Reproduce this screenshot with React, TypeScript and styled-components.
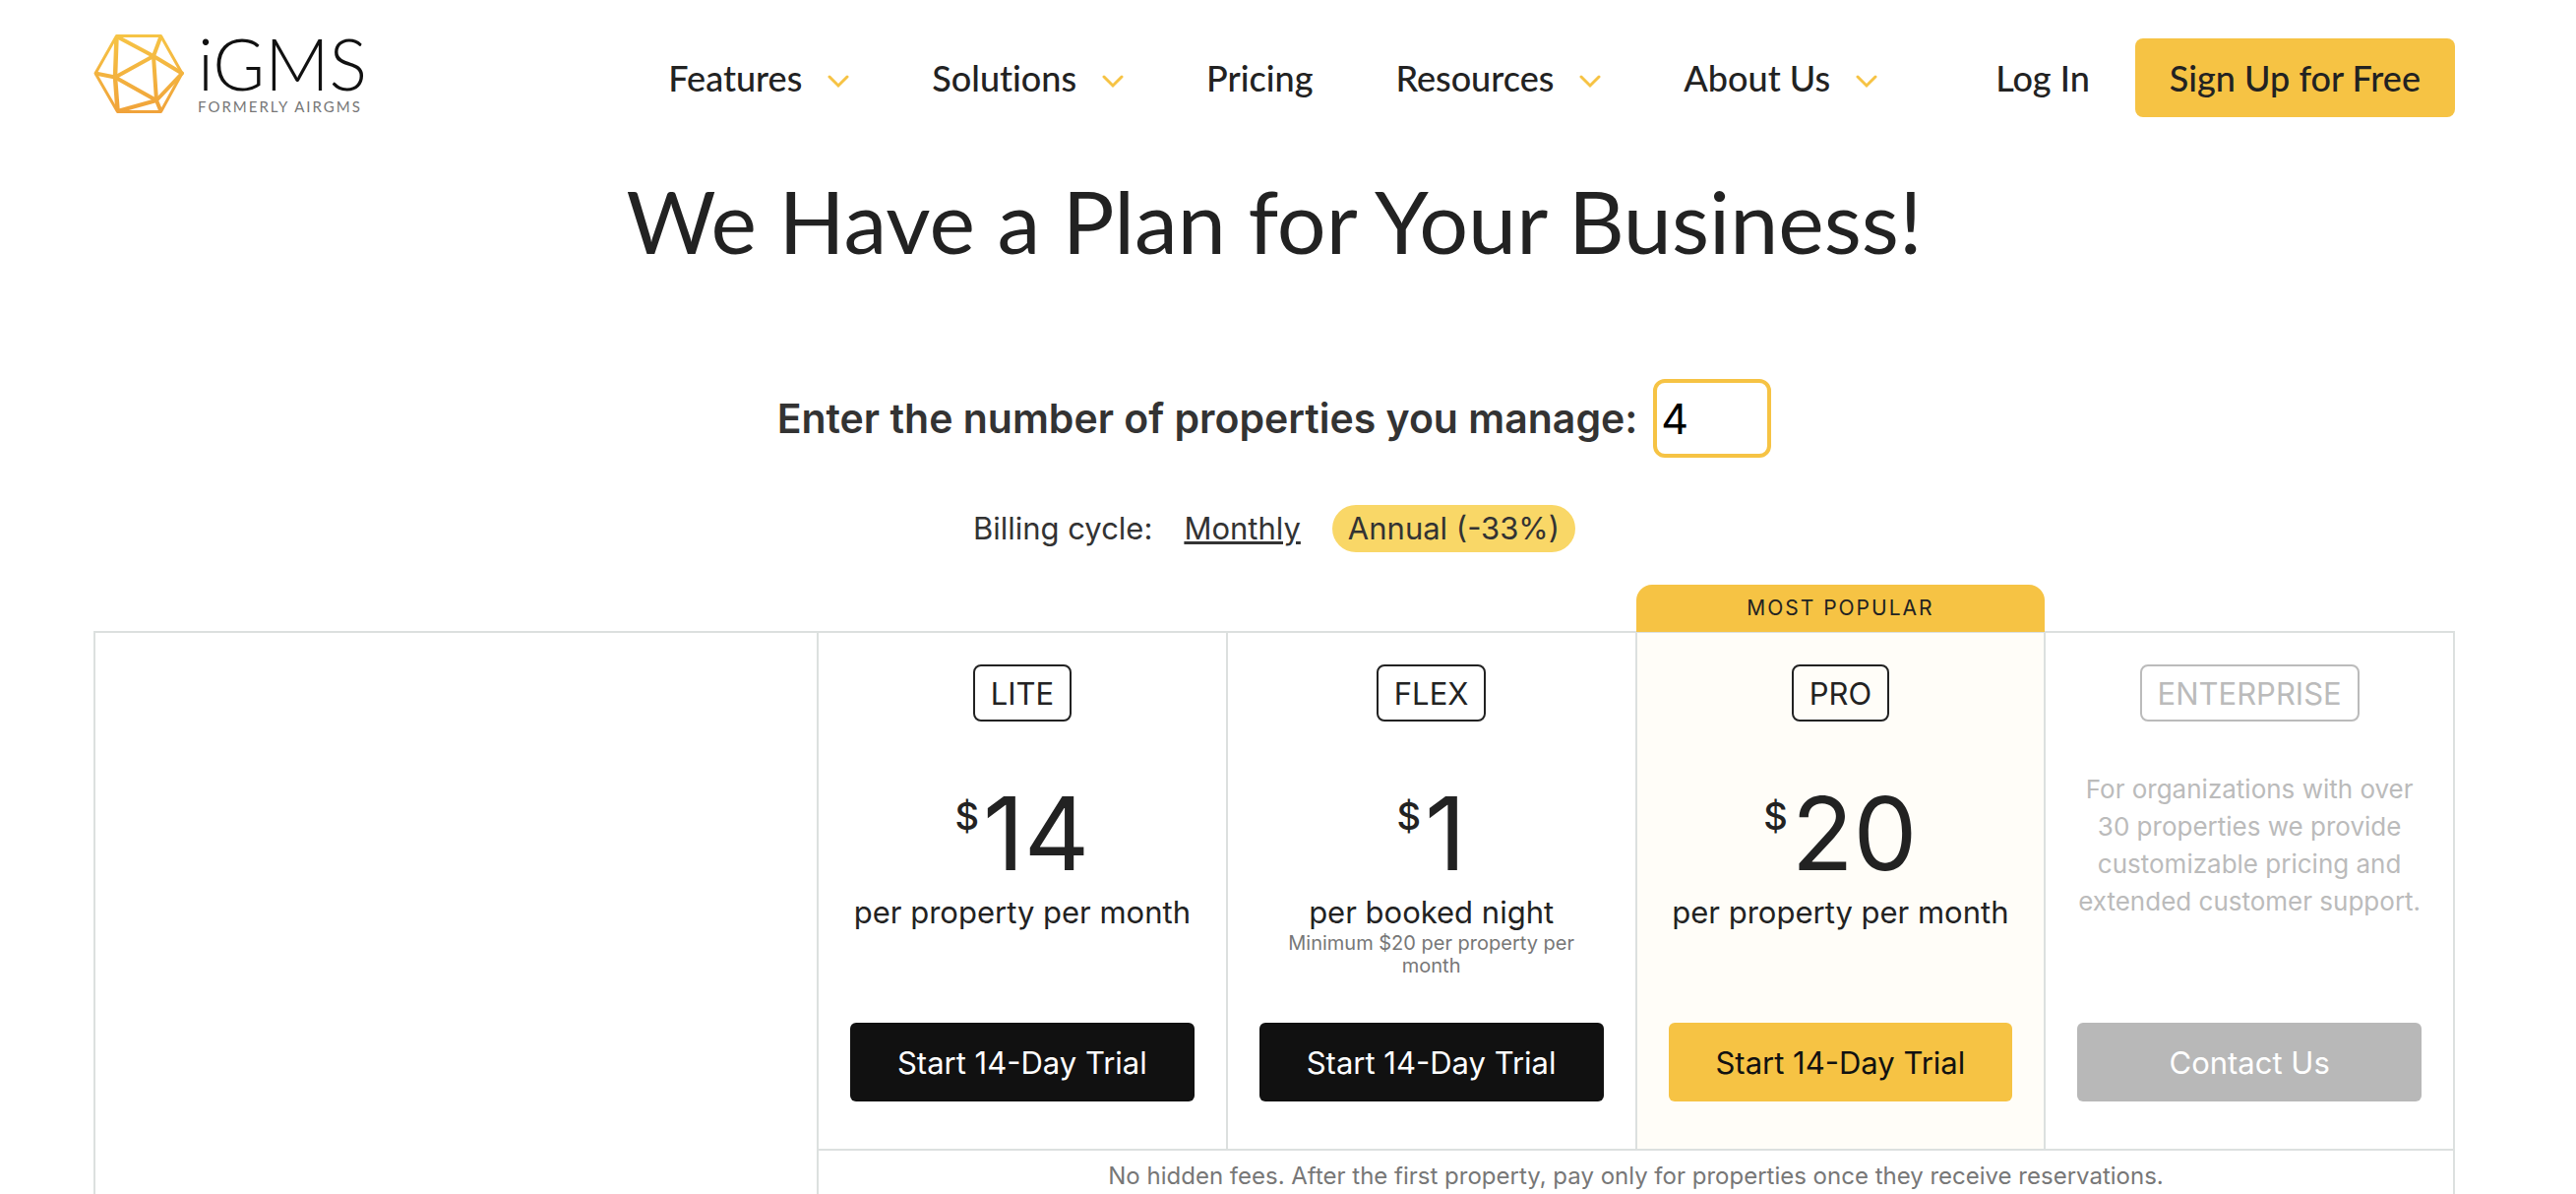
import React, { useState } from "react";
import styled, { createGlobalStyle, css } from "styled-components";

const yellow = "#f6c344";
const line = "#dce0df";
const ink = "#222222";

const GlobalStyle = createGlobalStyle`
  *, *::before, *::after { box-sizing: border-box; }
  body { margin: 0; background: #ffffff; color: ${ink}; font-family: Inter, "Liberation Sans", sans-serif; }
  button, input { font: inherit; }
`;

const Page = styled.div`
  height: 100vh;
  overflow: hidden;
  padding: 0 28px 0 0;
`;

const Container = styled.div`
  max-width: 2400px;
  margin: 0 auto;
`;

const Header = styled.header`
  display: flex;
  align-items: flex-start;
  justify-content: space-between;
  padding-top: 35px;
  font-family: Lato, "Liberation Sans", sans-serif;
  font-variant-ligatures: none;
`;

const Logo = styled.a`
  display: flex;
  align-items: flex-start;
  gap: 14px;
  color: #111111;
  text-decoration: none;
`;

const Wordmark = styled.span`
  display: flex;
  flex-direction: column;
`;

const Brand = styled.span`
  font-size: 72px;
  font-weight: 300;
  line-height: 58px;
`;

const Former = styled.span`
  font-size: 15px;
  line-height: 30px;
  letter-spacing: 2px;
  color: #777777;
`;

const Nav = styled.nav`
  display: flex;
  align-items: center;
  gap: 84px;
  height: 80px;
  margin-top: 4px;
  font-size: 36px;
  font-weight: 500;
  line-height: 44px;
`;

const NavLink = styled.a`
  display: flex;
  align-items: center;
  gap: 24px;
  color: ${ink};
  text-decoration: none;
  white-space: nowrap;
`;

const Account = styled.div`
  display: flex;
  align-items: center;
  gap: 46px;
  margin-left: 36px;
`;

const SignUp = styled.a`
  display: flex;
  align-items: center;
  height: 80px;
  padding: 0 35px;
  border-radius: 8px;
  background: ${yellow};
  color: ${ink};
  text-decoration: none;
  white-space: nowrap;
`;

const Title = styled.h1`
  margin: 47px 0 0;
  font-family: Lato, "Liberation Sans", sans-serif;
  font-size: 88px;
  font-weight: 400;
  line-height: 108px;
  text-align: center;
`;

const CountRow = styled.div`
  display: flex;
  justify-content: center;
  align-items: center;
  gap: 16px;
  margin-top: 107px;
  font-size: 43px;
  color: #333333;
`;

const CountLabel = styled.label`
  font-size: 41px;
  font-weight: 600;
`;

const CountInput = styled.input`
  width: 120px;
  height: 80px;
  padding: 0 4px;
  border: 4px solid ${yellow};
  border-radius: 12px;
  background: #ffffff;
  color: #000000;
  outline: none;
`;

const Billing = styled.div`
  display: flex;
  justify-content: center;
  align-items: center;
  gap: 16px;
  margin-top: 48px;
  font-size: 31px;
  line-height: 48px;
  color: #333333;
`;

const Cycle = styled.button<{ $active: boolean }>`
  height: 48px;
  padding: 0 16px;
  border: 0;
  border-radius: 24px;
  background: ${(p) => (p.$active ? "#f9d767" : "transparent")};
  color: inherit;
  text-decoration: ${(p) => (p.$active ? "none" : "underline")};
  cursor: pointer;
`;

const Plans = styled.table`
  width: 100%;
  margin-top: 80px;
  table-layout: fixed;
  border-collapse: collapse;
  text-align: center;

  th, td { border: 2px solid ${line}; }
`;

const FeatureCol = styled.col`
  width: 735px;
`;

const Cell = styled.th<{ $popular?: boolean; $muted?: boolean }>`
  position: relative;
  padding: 0;
  font-weight: 400;
  vertical-align: top;
  background: ${(p) => (p.$popular ? "#fffdf8" : "#ffffff")};
  color: ${(p) => (p.$muted ? "#bbbbbb" : ink)};
`;

const Ribbon = styled.div`
  position: absolute;
  left: -1px;
  right: -1px;
  bottom: 100%;
  margin-bottom: 1px;
  height: 48px;
  border-radius: 16px 16px 0 0;
  background: ${yellow};
  font-size: 21px;
  line-height: 48px;
  letter-spacing: 2px;
`;

const CellBody = styled.div`
  display: flex;
  flex-direction: column;
  align-items: center;
  height: 524px;
  padding: 32px 32px 48px;
`;

const PlanName = styled.div`
  height: 58px;
  padding: 0 16px;
  border: 2px solid currentColor;
  border-radius: 8px;
  font-size: 31px;
  line-height: 56px;
`;

const Price = styled.div`
  display: flex;
  align-items: flex-start;
  gap: 4px;
  margin-top: 62px;
  font-size: 103px;
  line-height: 104px;
`;

const Currency = styled.span`
  margin-top: 12px;
  font-size: 38px;
  font-weight: 500;
  line-height: 44px;
`;

const Unit = styled.div`
  margin-top: 8px;
  font-size: 31px;
  line-height: 40px;
  white-space: nowrap;
`;

const Minimum = styled.div`
  width: 320px;
  font-size: 20px;
  line-height: 23px;
  color: #777777;
`;

const Pitch = styled.p`
  margin: 50px 0 0;
  font-size: 26px;
  line-height: 38px;
`;

const tones = {
  dark: css`background: #111111; color: #ffffff;`,
  accent: css`background: ${yellow}; color: #111111;`,
  muted: css`background: #b8b8b8; color: #ffffff;`,
};

const Action = styled.button<{ $tone: keyof typeof tones }>`
  width: 100%;
  height: 80px;
  margin-top: auto;
  border: 0;
  border-radius: 6px;
  font-size: 31px;
  cursor: pointer;
  ${(p) => tones[p.$tone]}
`;

const Note = styled.td`
  height: 60px;
  padding: 0 0 8px;
  font-size: 24px;
  color: #777777;
`;

const LogoMark = () => (
  <svg width="92" height="81" viewBox="0 0 92 81" fill="none" aria-hidden="true">
    <defs>
      <linearGradient id="mark" x1="0" y1="0" x2="0" y2="81" gradientUnits="userSpaceOnUse">
        <stop offset="0" stopColor="#f6c445" />
        <stop offset="1" stopColor="#f0a23a" />
      </linearGradient>
    </defs>
    <g stroke="url(#mark)" strokeWidth="3" strokeLinejoin="round">
      <path d="M23.500 1.500H68.500L90 39.500L68.500 78.500H24.500L2 39.500Z" />
      <path strokeWidth="4.500" d="M23.500 3L22 43.500L24.500 77" />
      <path strokeWidth="4" d="M23.500 2L61 22L64 67L24.500 78" />
      <path strokeWidth="4" d="M2 39.500L22 43.500L61 22L68.500 2M61 22L90 39.500L64 67L22 43.500M64 67L68.500 78" />
    </g>
  </svg>
);

const Chevron = () => (
  <svg width="24" height="24" viewBox="0 0 24 24" fill="none" aria-hidden="true">
    <path d="M4 11L13 20L22 11" stroke={yellow} strokeWidth="3" strokeLinecap="round" />
  </svg>
);

const links = [
  { label: "Features", menu: true },
  { label: "Solutions", menu: true },
  { label: "Pricing", menu: false },
  { label: "Resources", menu: true },
  { label: "About Us", menu: true },
];

type Plan = {
  name: string;
  price?: number;
  unit?: string;
  minimum?: string;
  pitch?: string;
  action: string;
  tone: keyof typeof tones;
};

const plans: Plan[] = [
  { name: "LITE", price: 14, unit: "per property per month", action: "Start 14-Day Trial", tone: "dark" },
  {
    name: "FLEX",
    price: 1,
    unit: "per booked night",
    minimum: "Minimum $20 per property per month",
    action: "Start 14-Day Trial",
    tone: "dark",
  },
  { name: "PRO", price: 20, unit: "per property per month", action: "Start 14-Day Trial", tone: "accent" },
  {
    name: "ENTERPRISE",
    pitch: "For organizations with over 30 properties we provide customizable pricing and extended customer support.",
    action: "Contact Us",
    tone: "muted",
  },
];

export default function App() {
  const [count, setCount] = useState("4");
  const [annual, setAnnual] = useState(true);

  return (
    <Page>
      <GlobalStyle />
      <Container>
        <Header>
          <Logo href="#">
            <LogoMark />
            <Wordmark>
              <Brand>iGMS</Brand>
              <Former>FORMERLY AIRGMS</Former>
            </Wordmark>
          </Logo>
          <Nav>
            {links.map((l) => (
              <NavLink key={l.label} href="#">
                {l.label}
                {l.menu && <Chevron />}
              </NavLink>
            ))}
            <Account>
              <NavLink href="#">Log In</NavLink>
              <SignUp href="#">Sign Up for Free</SignUp>
            </Account>
          </Nav>
        </Header>

        <main>
          <Title>We Have a Plan for Your Business!</Title>
          <CountRow>
            <CountLabel htmlFor="count">Enter the number of properties you manage:</CountLabel>
            <CountInput id="count" value={count} onChange={(e) => setCount(e.target.value)} />
          </CountRow>
          <Billing>
            <span>Billing cycle:</span>
            <Cycle type="button" $active={!annual} onClick={() => setAnnual(false)}>
              Monthly
            </Cycle>
            <Cycle type="button" $active={annual} onClick={() => setAnnual(true)}>
              Annual (-33%)
            </Cycle>
          </Billing>

          <Plans>
            <colgroup>
              <FeatureCol />
              <col span={4} />
            </colgroup>
            <tbody>
              <tr>
                <Cell as="td" rowSpan={2} />
                {plans.map((p) => (
                  <Cell key={p.name} scope="col" $popular={p.tone === "accent"} $muted={p.tone === "muted"}>
                    {p.tone === "accent" && <Ribbon>MOST POPULAR</Ribbon>}
                    <CellBody>
                      <PlanName>{p.name}</PlanName>
                      {p.price !== undefined && (
                        <Price>
                          <Currency>$</Currency>
                          {p.price}
                        </Price>
                      )}
                      {p.unit && <Unit>{p.unit}</Unit>}
                      {p.minimum && <Minimum>{p.minimum}</Minimum>}
                      {p.pitch && <Pitch>{p.pitch}</Pitch>}
                      <Action type="button" $tone={p.tone}>
                        {p.action}
                      </Action>
                    </CellBody>
                  </Cell>
                ))}
              </tr>
              <tr>
                <Note colSpan={4}>
                  No hidden fees. After the first property, pay only for properties once they receive reservations.
                </Note>
              </tr>
            </tbody>
          </Plans>
        </main>
      </Container>
    </Page>
  );
}
